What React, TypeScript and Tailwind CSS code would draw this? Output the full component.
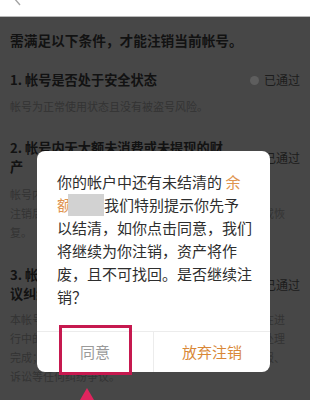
import React from "react";

const font = { fontFamily: '"Noto Sans CJK SC", "Noto Sans", sans-serif' };

const sections = [
  {
    title: ["1. 帐号是否处于安全状态"],
    desc: ["帐号为正常使用状态且没有被盗号风险。"],
    titleMt: "mt-[20px]",
    descMt: "mt-[8px]",
  },
  {
    title: ["2. 帐号内无大额未消费或未提现的财", "产"],
    desc: [
      "帐号内没有未消费的余额或未提现的收益，否则",
      "注销后上述财产将被视为你自愿放弃，且无法再找回或恢",
      "复。",
    ],
    titleMt: "mt-[22px]",
    descMt: "mt-[9px]",
  },
  {
    title: ["3. 帐号无任何纠纷，包括投诉、举报或争", "议纠纷"],
    desc: [
      "本帐号内不存在未完成的订单，包括已提交但仍然正在进",
      "行中的交易，所有申诉、退款、售后等事项均已全部处理",
      "完成；且帐号不存在任何投诉、举报、被投诉、被举报、",
      "诉讼等任何纠纷争议。",
    ],
    titleMt: "mt-[23px]",
    descMt: "mt-[7px]",
  },
];

const Status = () => (
  <div className="flex items-center gap-[5px] shrink-0 pt-[1px]">
    <span className="w-[9px] h-[9px] rounded-full bg-[#5e5e5e]" />
    <span className="text-[12px] leading-[16px] text-[#1c1c1c]">已通过</span>
  </div>
);

export default function App() {
  return (
    <div className="relative w-[310px] h-[400px] overflow-hidden bg-[#474747]" style={font}>
      {/* nav bar, mostly scrolled off */}
      <div className="relative h-[17px] overflow-hidden bg-white border-b border-[#b8b8b8]">
        <svg className="absolute left-[11px] top-[-10px]" width="12" height="16" viewBox="0 0 12 16">
          <path d="M9 1 L3 8 L9 15" fill="none" stroke="#a5a5a5" strokeWidth="1.4" />
        </svg>
        <div className="-mt-[17px] text-center text-[16px] leading-[16px] font-bold text-[#111]">
          注销条件
        </div>
      </div>

      <div className="px-[10px]">
        <div className="mt-[13px] text-[13.7px] leading-[20px] font-bold text-[#121212] whitespace-nowrap">
          需满足以下条件，才能注销当前帐号。
        </div>

        {sections.map((s, i) => (
          <div key={i}>
            <div className={`${s.titleMt} flex items-center justify-between`}>
              <div className="text-[13.2px] leading-[19px] font-bold text-[#121212] whitespace-nowrap">
                {s.title.map((t, j) => (
                  <div key={j}>{t}</div>
                ))}
              </div>
              <Status />
            </div>
            <div className={`${s.descMt} text-[11px] leading-[19px] text-[#333333] whitespace-nowrap`}>
              {s.desc.map((t, j) => (
                <div key={j}>{t}</div>
              ))}
            </div>
          </div>
        ))}
      </div>

      {/* dialog */}
      <div className="absolute left-[37px] top-[151px] w-[233px] h-[221px] bg-white rounded-[8px] flex flex-col">
        <div className="flex-1 px-[20px] pt-[19px] text-[15px] leading-[23px] text-[#2e2e2e] whitespace-nowrap">
          <div>
            你的帐户中还有未结清的 <span className="text-[#df9550]">余</span>
          </div>
          <div className="flex items-center">
            <span className="text-[#df9550]">额</span>
            <span className="-ml-[4px] w-[36px] h-[22px] bg-[#d2d2d2]" />
            <span>我们特别提示你先予</span>
          </div>
          <div>以结清，如你点击同意，我们</div>
          <div>将继续为你注销，资产将作</div>
          <div>废，且不可找回。是否继续注</div>
          <div>销？</div>
        </div>
        <div className="h-[41px] flex border-t border-[#ececec] text-[15px]">
          <div className="flex-1 flex items-center justify-center text-[#9a9a9a]">同意</div>
          <div className="w-px bg-[#ececec]" />
          <div className="flex-1 flex items-center justify-center text-[#d98838]">放弃注销</div>
        </div>
      </div>

      {/* highlight annotation */}
      <div className="absolute left-[59px] top-[325px] w-[73px] h-[50px] border-[3px] border-[#c6194f]" />
      <svg className="absolute left-[78px] top-[386px]" width="18" height="14" viewBox="0 0 18 14">
        <path d="M9 2 L16 14 L2 14 Z" fill="#e0245e" />
      </svg>
    </div>
  );
}
